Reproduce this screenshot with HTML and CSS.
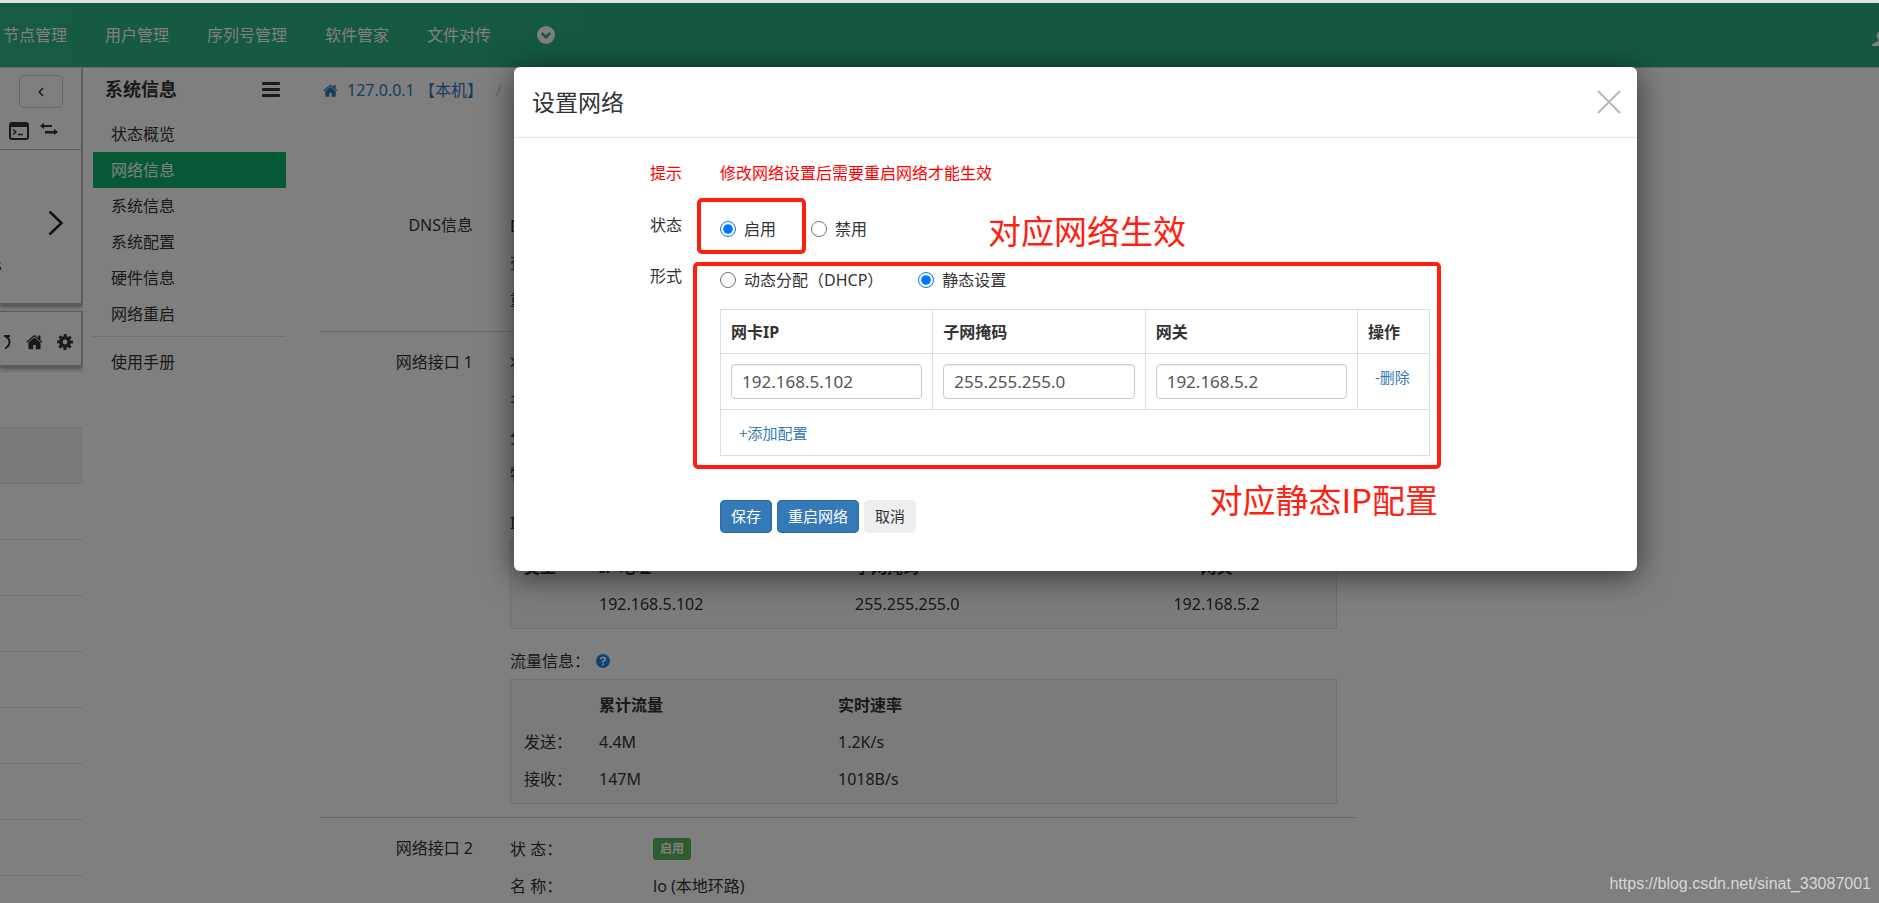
FILE: index.html
```html
<!DOCTYPE html>
<html lang="zh-CN">
<head>
<meta charset="utf-8">
<title>设置网络</title>
<link rel="stylesheet" href="styles.css">
</head>
<body>
<svg class="defs" aria-hidden="true">
  <symbol id="home" viewBox="0 0 18 16"><path d="M9 3.2 2.6 8.6V15q0 .8.8.8h4.2v-4.6h2.8v4.600h4.200q.8 0 .8-.8V8.600z"/><path d="M17.700 7.800 15.300 5.800V1.200h-2.400v2.500L10 1.200q-1-.8-2 0L.3 7.800l.9 1L9 2.300l7.800 6.500z"/></symbol>
</svg>
<header class="topbar">
  <nav class="topnav">
    <a href="#">节点管理</a><a href="#">用户管理</a><a href="#">序列号管理</a><a href="#">软件管家</a><a href="#">文件对传</a>
    <button class="more" aria-label="更多"><svg width="18" height="18" viewBox="0 0 18 18"><circle cx="9" cy="9" r="9" fill="#fff"/><path d="M4.800 7 9 11.200 13.200 7" fill="none" stroke="#28b080" stroke-width="2.600"/></svg></button>
  </nav>
  <svg class="user" width="16" height="16" viewBox="0 0 16 16" fill="#fff"><circle cx="9" cy="4.500" r="4.300"/><path d="M0 15q0-2.500 3-3.300 3.500-1 3.500-3.700h5q0 2.700 3 3.700 1.500.8 1.500 3.300z"/></svg>
</header>
<div class="page">
  <aside class="nodes">
    <section class="node-panel">
      <div class="node-tools">
        <button class="back" aria-label="返回"><svg width="8" height="12" viewBox="0 0 8 12" fill="none" stroke="#333" stroke-width="1.500"><path d="M6 2 2.200 6 6 10"/></svg></button>
        <div class="tool-icons">
          <svg width="20" height="18" viewBox="0 0 20 18"><rect x="1" y="1" width="18" height="16" rx="2" fill="none" stroke="#333" stroke-width="2"/><path d="M1 1h18v4H1z" fill="#333"/><path d="M4 7.500 6.800 10 4 12.500M9 12.500h5" fill="none" stroke="#333" stroke-width="1.500"/></svg>
          <svg width="18" height="13" viewBox="0 0 18 13" fill="#333"><path d="M0 4 4 .800V3h8v2H4v2zM18 10l-4-3.200V9H5v2.500h9V13z"/></svg>
        </div>
      </div>
      <div class="node-body">
        <svg width="16" height="26" viewBox="0 0 16 26" fill="none" stroke="#222" stroke-width="2.500"><path d="M1.500 1.500 13.500 13 1.500 24.500"/></svg>
        <span>s</span>
      </div>
    </section>
    <section class="node-actions">
      <svg width="16" height="16" viewBox="0 0 16 16" fill="none" stroke="#333" stroke-width="2"><path d="M8 2h6M9 2q4.500 2 4.500 6T9 14.500"/></svg>
      <svg width="17" height="16" fill="#333"><use href="#home"/></svg>
      <svg width="16" height="16" viewBox="0 0 16 16"><circle cx="8" cy="8" r="4.200" fill="none" stroke="#333" stroke-width="3.600"/><circle cx="8" cy="8" r="6.600" fill="none" stroke="#333" stroke-width="2.700" stroke-dasharray="2.900 2.284" stroke-dashoffset="1.450"/></svg>
    </section>
    <ul class="node-list"><li></li><li class="shaded"></li><li></li><li></li><li></li><li></li><li></li><li></li><li></li><li></li></ul>
  </aside>
  <nav class="menu">
    <div class="menu-head"><h2>系统信息</h2><button class="burger" aria-label="菜单"><svg width="18" height="15" viewBox="0 0 18 15" fill="#333"><rect width="18" height="3" rx="1"/><rect y="6" width="18" height="3" rx="1"/><rect y="12" width="18" height="3" rx="1"/></svg></button></div>
    <a href="#">状态概览</a><a href="#" class="active">网络信息</a><a href="#">系统信息</a><a href="#">系统配置</a><a href="#">硬件信息</a><a href="#">网络重启</a>
    <hr>
    <a href="#">使用手册</a>
  </nav>
  <main class="content">
    <div class="crumbs"><svg width="15" height="13" viewBox="0 0 18 16" fill="#337ab7"><use href="#home"/></svg><a href="#">127.0.0.1 【本机】</a><span>/</span></div>
    <section class="block">
      <h3>DNS信息</h3>
      <div class="rows"><div class="row"><span>DNS：</span></div><div class="row"><span>查看：</span></div><div class="row"><span>重置：</span></div></div>
    </section>
    <section class="block">
      <h3>网络接口 1</h3>
      <div class="rows">
        <div class="row"><span>状 态：</span></div><div class="row"><span>名 称：</span></div><div class="row"><span>分 配：</span></div><div class="row"><span>物 理：</span></div>
        <div class="row caption">IP信息：</div>
        <div class="box"><table class="ips">
          <tr><th>类型</th><th>IP 地址</th><th>子网掩码</th><th>网关</th></tr>
          <tr><td></td><td>192.168.5.102</td><td>255.255.255.0</td><td>192.168.5.2</td></tr>
        </table></div>
        <div class="row caption">流量信息：<svg width="14" height="14" viewBox="0 0 14 14"><circle cx="7" cy="7" r="7" fill="#1e88e5"/><path d="M4.800 5.400Q4.900 3.400 7 3.400t2.200 1.800Q9.200 6.300 8 6.900 7 7.400 7 8.500M7 9.500v1.800" fill="none" stroke="#fff" stroke-width="1.800"/></svg></div>
        <div class="box"><table class="traffic">
          <tr><th></th><th>累计流量</th><th>实时速率</th></tr>
          <tr><td>发送：</td><td>4.4M</td><td>1.2K/s</td></tr>
          <tr><td>接收：</td><td>147M</td><td>1018B/s</td></tr>
        </table></div>
      </div>
    </section>
    <section class="block">
      <h3>网络接口 2</h3>
      <div class="rows"><div class="row"><span>状 态：</span><b class="badge">启用</b></div><div class="row"><span>名 称：</span>lo (本地环路)</div></div>
    </section>
  </main>
</div>
<div class="overlay">
  <div class="modal" role="dialog" aria-labelledby="title">
    <div class="modal-head"><h1 id="title">设置网络</h1><button class="close" aria-label="关闭"><svg width="24" height="24" viewBox="0 0 24 24" stroke="#b8b8b8" stroke-width="2"><path d="M1 1 23 23M23 1 1 23"/></svg></button></div>
    <form class="form">
      <div class="field warn"><span class="name">提示</span><div>修改网络设置后需要重启网络才能生效</div></div>
      <div class="field"><span class="name">状态</span><div class="choices"><label><input type="radio" name="state" checked>启用</label><label><input type="radio" name="state">禁用</label></div></div>
      <div class="field"><span class="name">形式</span>
        <div>
          <div class="choices"><label><input type="radio" name="mode">动态分配（DHCP）</label><label><input type="radio" name="mode" checked>静态设置</label></div>
          <table class="config">
            <tr><th>网卡IP</th><th>子网掩码</th><th>网关</th><th class="op">操作</th></tr>
            <tr><td><input type="text" aria-label="网卡IP" value="192.168.5.102"></td><td><input type="text" aria-label="子网掩码" value="255.255.255.0"></td><td><input type="text" aria-label="网关" value="192.168.5.2"></td><td class="op"><a href="#">-删除</a></td></tr>
            <tr><td colspan="4" class="add"><a href="#">+添加配置</a></td></tr>
          </table>
          <div class="buttons"><button type="button" class="primary">保存</button><button type="button" class="primary">重启网络</button><button type="button">取消</button></div>
        </div>
      </div>
    </form>
    <div class="mark mark-state"></div>
    <div class="mark mark-mode"></div>
    <div class="note note-state">对应网络生效</div>
    <div class="note note-mode">对应静态IP配置</div>
  </div>
</div>
<div class="watermark">https://blog.csdn.net/sinat_33087001</div>
</body>
</html>
```
FILE: styles.css
```css
* { box-sizing: border-box; }
body {
  margin: 0;
  height: 100vh;
  overflow: hidden;
  display: flex;
  flex-direction: column;
  position: relative;
  font: 16px/20px "Noto Sans", "Noto Sans CJK SC", sans-serif;
  color: #333;
  background: #fff;
}
.defs { position: absolute; width: 0; height: 0; }
a { color: #337ab7; text-decoration: none; }
button { font: inherit; color: inherit; border: 0; background: none; padding: 0; }
h1, h2, h3, ul { margin: 0; padding: 0; font-weight: 400; }
svg { display: block; flex: none; }
table { border-collapse: collapse; table-layout: fixed; width: 100%; }
th, td { text-align: left; padding: 0; }

.topbar {
  flex: none;
  height: 67px;
  border-top: 3px solid #dfe1e3;
  background: linear-gradient(90deg, #2cb684, #28b07f 40%);
  display: flex;
  align-items: center;
  justify-content: space-between;
  overflow: hidden;
}
.topnav { display: flex; align-items: center; gap: 38px; padding-left: 3px; }
.topnav a { color: #fff; }
.more { margin-left: 8px; }
.user { margin-right: -9px; margin-top: 7px; }

.page { flex: 1; min-height: 0; display: flex; border-top: 1px solid #ccc; }
.nodes { width: 83px; flex: none; overflow: hidden; }
.node-panel { height: 237px; border: solid #bbb; border-width: 0 2px 2px 0; box-shadow: 0 2px 4px #999; }
.node-tools { height: 82px; padding-top: 7px; border-bottom: 1px solid #bbb; }
.back {
  display: flex;
  align-items: center;
  justify-content: center;
  width: 44px;
  height: 33px;
  margin-left: 19px;
  border: 1px solid #ccc;
  border-radius: 5px;
}
.tool-icons { display: flex; gap: 11px; padding: 14px 0 0 9px; }
.node-body { padding: 60px 0 0 48px; }
.node-body span { display: block; margin: 19px 0 0 -54px; }
.node-actions {
  height: 56px;
  margin-top: 6px;
  padding: 6px 8px 0 0;
  border: solid #bbb;
  border-width: 1px 2px 2px 0;
  box-shadow: 0 2px 4px #999;
  display: flex;
  align-items: center;
  justify-content: flex-end;
  gap: 14px;
}
.node-list { list-style: none; margin-top: 4px; }
.node-list li { height: 56px; border-top: 1px solid #e4e4e4; }
.node-list .shaded { background: #f5f5f5; }

.menu { width: 193px; flex: none; margin-left: 10px; }
.menu-head { height: 48px; padding: 0 6px 6px 12px; display: flex; align-items: center; justify-content: space-between; }
.menu-head h2 { font-size: 18px; font-weight: 700; }
.menu a { display: block; color: #333; line-height: 36px; padding-left: 18px; }
.menu .active { background: #0ab26d; color: #fff; }
.menu hr { height: 1px; margin: 4px 0 7px; border: 0; background: #ddd; }

.content { flex: 1; max-width: 1037px; margin-left: 34px; }
.crumbs { height: 44px; display: flex; align-items: center; gap: 9px; padding-left: 3px; margin-bottom: 83px; }
.crumbs span { color: #ccc; margin-left: 4px; }
.block { display: grid; grid-template-columns: 153px 1fr; gap: 37px; padding: 12px 20px 13px 0; }
.block + .block { border-top: 1px solid #d4d4d4; }
.block h3 { font-size: 16px; line-height: 37px; text-align: right; }
.row { height: 37px; display: flex; align-items: center; }
.row span { width: 143px; }
.row + .caption { margin-top: 12px; }
.box + .caption { margin-top: 13px; }
.caption svg { margin-left: 6px; }
.badge { background: #5cb85c; color: #fff; font-size: 12px; line-height: 22px; padding: 0 7px; border-radius: 3px; }
.box { background: #f7f7f7; border: 1px solid #e3e3e3; padding: 6px 0; }
.box th, .box td { height: 37px; }
.box th:first-child { width: 88px; }
.box th:first-child, .box td:first-child { padding-left: 13px; }
.ips th:nth-child(2) { width: 256px; }
.ips th:nth-child(3) { width: 242px; }
.ips th:nth-child(4), .ips td:nth-child(4) { text-align: center; }
.traffic th:nth-child(2) { width: 239px; }

.overlay { position: absolute; inset: 3px 0 0; background: rgba(0, 0, 0, .5); }
.modal {
  position: relative;
  margin: 64px 242px 0 514px;
  padding-bottom: 38px;
  background: #fff;
  border-radius: 6px;
  box-shadow: 0 5px 30px rgba(0, 0, 0, .6);
}
.modal-head {
  height: 71px;
  padding: 0 16px 0 18px;
  border-bottom: 1px solid #e5e5e5;
  display: flex;
  align-items: center;
  justify-content: space-between;
}
.modal-head h1 { font-size: 23px; line-height: 32px; }
.form { padding: 25px 207px 0 0; }
.field { display: grid; grid-template-columns: 168px 1fr; gap: 38px; margin-bottom: 31px; }
.field:last-child { margin-bottom: 0; }
.field .name { text-align: right; }
.warn { color: #f00; margin-bottom: 32px; }
.choices { display: flex; gap: 35px; padding-top: 4px; height: 20px; }
.choices label { display: flex; align-items: center; gap: 8px; height: 20px; }
.choices input { width: 16px; height: 16px; margin: 0; accent-color: #0075ff; }
.config { margin-top: 23px; }
.config th, .config td { border: 1px solid #ddd; padding: 0 10px; height: 44px; }
.config td { height: 56px; }
.config .op { width: 72px; }
.config td.op { vertical-align: top; padding: 13px 0 0 17px; font-size: 15px; }
.config td.add { height: 46px; padding-left: 18px; font-size: 15px; }
.config input {
  display: block;
  width: 100%;
  height: 35px;
  padding: 0 10px;
  font: inherit;
  font-size: 17px;
  color: #555;
  border: 1px solid #ccc;
  border-radius: 4px;
  box-shadow: inset 0 1px 1px rgba(0, 0, 0, .08);
}
.buttons { display: flex; gap: 5px; margin-top: 44px; }
.buttons button { height: 33px; padding: 0 11px 2px; font-size: 15px; border-radius: 5px; background: #eee; }
.buttons .primary { background: #337ab7; color: #fff; box-shadow: inset 0 0 0 1px #2e6da4; }
.mark { position: absolute; border: 4px solid #ff1e10; border-radius: 5px; pointer-events: none; }
.mark-state { left: 183px; top: 131px; width: 109px; height: 56px; }
.mark-mode { left: 179px; right: 196px; top: 195px; height: 207px; }
.note {
  position: absolute;
  color: #ff1e10;
  font-family: "Noto Sans CJK SC", sans-serif;
  font-size: 33px;
  line-height: 40px;
  white-space: nowrap;
}
.note-state { left: 474px; top: 143px; }
.note-mode { right: 199px; top: 412px; }
.watermark {
  position: absolute;
  right: 8px;
  bottom: 9px;
  font: 16px/20px "Liberation Sans", sans-serif;
  color: #d6d6d6;
}
```
